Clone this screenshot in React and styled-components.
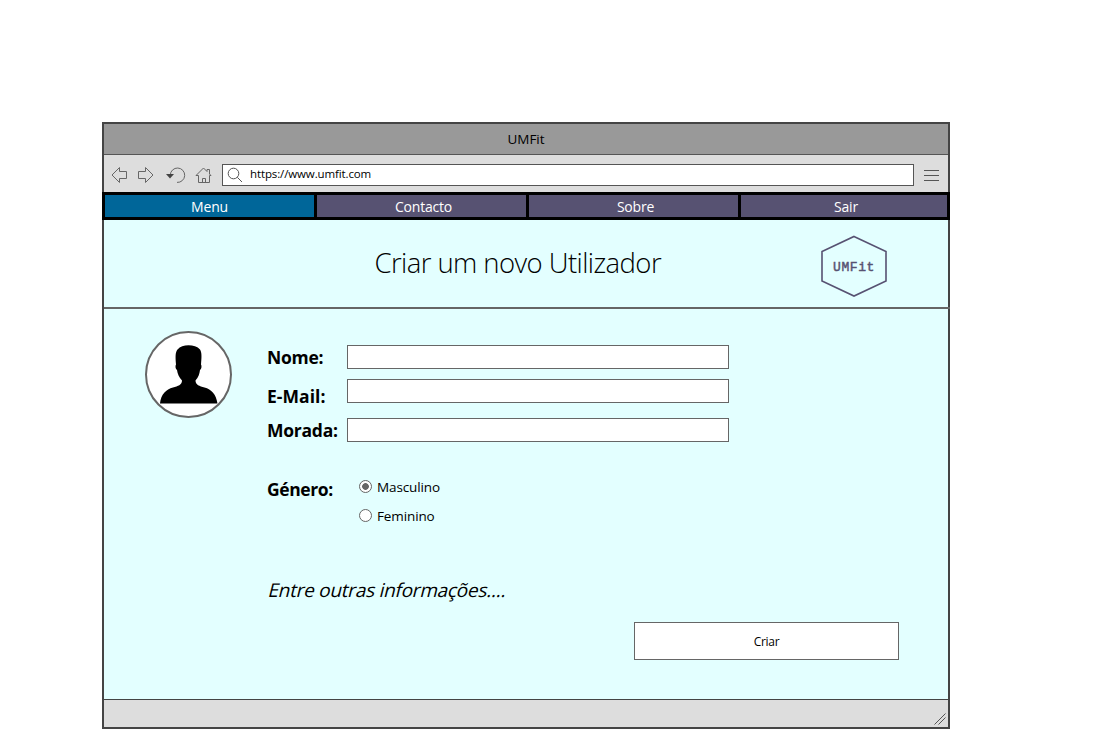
import React, { useState } from "react";
import styled, { createGlobalStyle } from "styled-components";

const GlobalStyle = createGlobalStyle`
  *, *::before, *::after { box-sizing: border-box; }
  html, body { margin: 0; background: #fff; overflow: hidden; }
  body { font-family: "Open Sans", "Noto Sans", sans-serif; color: #000; }
`;

const Page = styled.div`
  padding: 122px 0 0 102px;
  height: 729px;
`;

const BrowserWindow = styled.div`
  width: 848px;
  height: 607px;
  border: 2px solid #444;
  display: flex;
  flex-direction: column;
  background: #e3ffff;
`;

const TitleBar = styled.div`
  height: 31px;
  flex: none;
  background: #999;
  border-bottom: 1px solid #555;
  text-align: center;
  font-size: 13.5px;
  line-height: 30px;
`;

const Toolbar = styled.div`
  height: 37px;
  flex: none;
  background: #ddd;
  display: flex;
  align-items: flex-start;
  padding: 9px 9px 0 7px;
`;

const ToolIcons = styled.svg`
  width: 111px;
  height: 22px;
  flex: none;
  fill: none;
  stroke: #666;
`;

const AddressBar = styled.div`
  width: 692px;
  height: 22px;
  border: 1px solid #555;
  background: #fff;
  display: flex;
  font-size: 11.5px;
  letter-spacing: -0.12px;
  line-height: 18px;
`;

const SearchIcon = styled.svg`
  width: 27px;
  height: 20px;
  flex: none;
  fill: none;
  stroke: #555;
`;

const MenuLines = styled.div`
  width: 15px;
  height: 11px;
  margin: 6px 0 0 10px;
  display: flex;
  flex-direction: column;
  justify-content: space-between;
`;

const MenuLine = styled.span`
  height: 1px;
  background: #555;
`;

const Nav = styled.nav`
  height: 28px;
  flex: none;
  margin: 0 -2px;
  padding: 3px;
  background: #000;
  display: grid;
  grid-template-columns: 209px 209px 209px 206px;
  gap: 3px;
`;

const NavItem = styled.a`
  background: ${(p) => (p.$active ? "#006699" : "#575272")};
  color: #fff;
  text-align: center;
  font-size: 14px;
  letter-spacing: -0.2px;
  line-height: 24px;
  height: 22px;
  padding-left: ${(p) => (p.$active ? 0 : 4)}px;
`;

const Header = styled.header`
  height: 89px;
  flex: none;
  margin-right: -2px;
  border-bottom: 2px solid #666;
  display: flex;
  align-items: flex-start;
`;

const Heading = styled.h1`
  margin: 0;
  width: 716px;
  padding-left: 270.5px;
  font-size: 27.5px;
  letter-spacing: -0.58px;
  font-weight: 300;
  line-height: 38px;
  padding-top: 24px;
  white-space: nowrap;
`;

const Logo = styled.div`
  width: 68px;
  height: 62px;
  margin-top: 15px;
  display: grid;
  place-items: center;
  color: #575272;
  font: 13px/1 "Liberation Mono", monospace;
  letter-spacing: 0.6px;
  -webkit-text-stroke: 0.45px #575272;
  > * { grid-area: 1 / 1; }
  > span { padding-top: 3px; }
`;

const Content = styled.main`
  flex: 1;
  display: flex;
  padding: 22px 49px 0 41px;
`;

const Avatar = styled.svg`
  width: 87px;
  height: 87px;
  flex: none;
`;

const Form = styled.form`
  flex: 1;
  margin-left: 35px;
  display: flex;
  flex-direction: column;
`;

const Field = styled.label`
  display: flex;
  height: 24px;
  margin-top: ${(p) => p.$top}px;
`;

const Label = styled.span`
  width: 80px;
  flex: none;
  font-size: 17.5px;
  letter-spacing: ${(p) => p.$spacing ?? -0.25}px;
  font-weight: 700;
  line-height: 24px;
  white-space: nowrap;
  padding-top: ${(p) => p.$drop || 0}px;
`;

const Input = styled.input`
  width: 382px;
  height: 24px;
  border: 1px solid #666;
  background: #fff;
  padding: 0 4px;
  outline: none;
`;

const GenderRow = styled.div`
  display: flex;
  margin-top: 33px;
  height: 60px;
`;

const Options = styled.div`
  margin-left: 12px;
  padding-top: 2px;
  display: flex;
  flex-direction: column;
  gap: 9px;
`;

const Option = styled.label`
  display: flex;
  align-items: center;
  gap: 5px;
  height: 20px;
  font-size: 13.5px;
  letter-spacing: -0.12px;
`;

const Radio = styled.input`
  appearance: none;
  width: 13px;
  height: 13px;
  margin: 0 0 2px;
  border: 1px solid #666;
  border-radius: 50%;
  background: #fff;
  &:checked {
    background: radial-gradient(circle, #666 0 3px, #fff 3.7px);
  }
`;

const Note = styled.p`
  margin: 41px 0 1px 2px;
  height: 28px;
  width: max-content;
  font-size: 19px;
  letter-spacing: -0.26px;
  line-height: 28px;
  transform: skewX(-14deg);
`;

const CreateButton = styled.button`
  align-self: flex-end;
  width: 265px;
  height: 38px;
  margin-top: 17px;
  padding: 0;
  border: 1px solid #666;
  background: #fff;
  color: #000;
  font: 12px "Open Sans", sans-serif;
  letter-spacing: -0.3px;
`;

const StatusBar = styled.footer`
  height: 28px;
  flex: none;
  border-top: 1px solid #444;
  background: #ddd;
  display: flex;
  justify-content: flex-end;
  align-items: flex-end;
  padding: 0 2px 2px 0;
`;

const navItems = ["Menu", "Contacto", "Sobre", "Sair"];

export default function App() {
  const [gender, setGender] = useState("Masculino");
  return (
    <Page>
      <GlobalStyle />
      <BrowserWindow>
        <TitleBar>UMFit</TitleBar>
        <Toolbar>
          <ToolIcons viewBox="0 0 111 22">
            <path d="M1 11 8.5 3.5V7.5H15.5V14.5H8.5V18.5Z" />
            <path d="M42 11 34.5 3.5V7.5H27.5V14.5H34.5V18.5Z" />
            <path d="M59.3 11A7.2 7.2 0 1 1 66 18.4" />
            <path d="M55 10H63L59 14.5Z" fill="#444" stroke="none" />
            <path d="M85 11.5 92.5 4 96 7.5V5.5H98.5V10L100 11.5H98.5V18.5H87.5V11.5ZM91.5 18.5V14.5H94.5V18.5" />
          </ToolIcons>
          <AddressBar>
            <SearchIcon viewBox="0 0 27 20">
              <circle cx="10.5" cy="8.5" r="5.3" />
              <path d="M14.3 12.3 19 17" />
            </SearchIcon>
            https://www.umfit.com
          </AddressBar>
          <MenuLines>
            <MenuLine />
            <MenuLine />
            <MenuLine />
          </MenuLines>
        </Toolbar>
        <Nav>
          {navItems.map((item, i) => (
            <NavItem key={item} $active={i === 0}>{item}</NavItem>
          ))}
        </Nav>
        <Header>
          <Heading>Criar um novo Utilizador</Heading>
          <Logo>
            <svg width="68" height="62" viewBox="0 0 68 62" fill="none" stroke="#575272" strokeWidth="1.6">
              <path d="M34 1.5 66 16.5V46L34 61 2 46V16.5Z" />
            </svg>
            <span>UMFit</span>
          </Logo>
        </Header>
        <Content>
          <Avatar viewBox="0 0 87 87">
            <circle cx="43.5" cy="43.5" r="42.5" fill="#fff" stroke="#666" strokeWidth="2" />
            <path d="M15 72.5C16 63 21 58.5 28 56.5C33 55 37 54 37 49.5C34 46 32.5 43 32 39C30.5 38 30 35 31 33.5C30.5 27 30 21.5 32.5 18.5C35 15.5 39 14.3 43.5 14.3C48 14.3 52.5 15.5 55 18.5C57 21.5 56.6 27 56 33.5C57 35 56.5 38 55 39C54.5 43 53.5 46 50.5 49.5C50.5 54 54.5 55 59.5 56.5C66.5 58.5 71 63 72.5 72.5Z" />
          </Avatar>
          <Form onSubmit={(e) => e.preventDefault()}>
            <Field $top={14}>
              <Label>Nome:</Label>
              <Input />
            </Field>
            <Field $top={10}>
              <Label $drop={5} $spacing={0.05}>E-Mail:</Label>
              <Input />
            </Field>
            <Field $top={15}>
              <Label>Morada:</Label>
              <Input />
            </Field>
            <GenderRow>
              <Label $drop={2} $spacing={-0.4}>Género:</Label>
              <Options>
                {["Masculino", "Feminino"].map((g) => (
                  <Option key={g}>
                    <Radio type="radio" name="gender" checked={gender === g} onChange={() => setGender(g)} />
                    {g}
                  </Option>
                ))}
              </Options>
            </GenderRow>
            <Note>Entre outras informações....</Note>
            <CreateButton>Criar</CreateButton>
          </Form>
        </Content>
        <StatusBar>
          <svg width="12" height="13" viewBox="0 0 12 13" stroke="#555" fill="none">
            <path d="M.5 12.5 11.5 1.5M4.5 12.5 11.5 5.5" />
          </svg>
        </StatusBar>
      </BrowserWindow>
    </Page>
  );
}
